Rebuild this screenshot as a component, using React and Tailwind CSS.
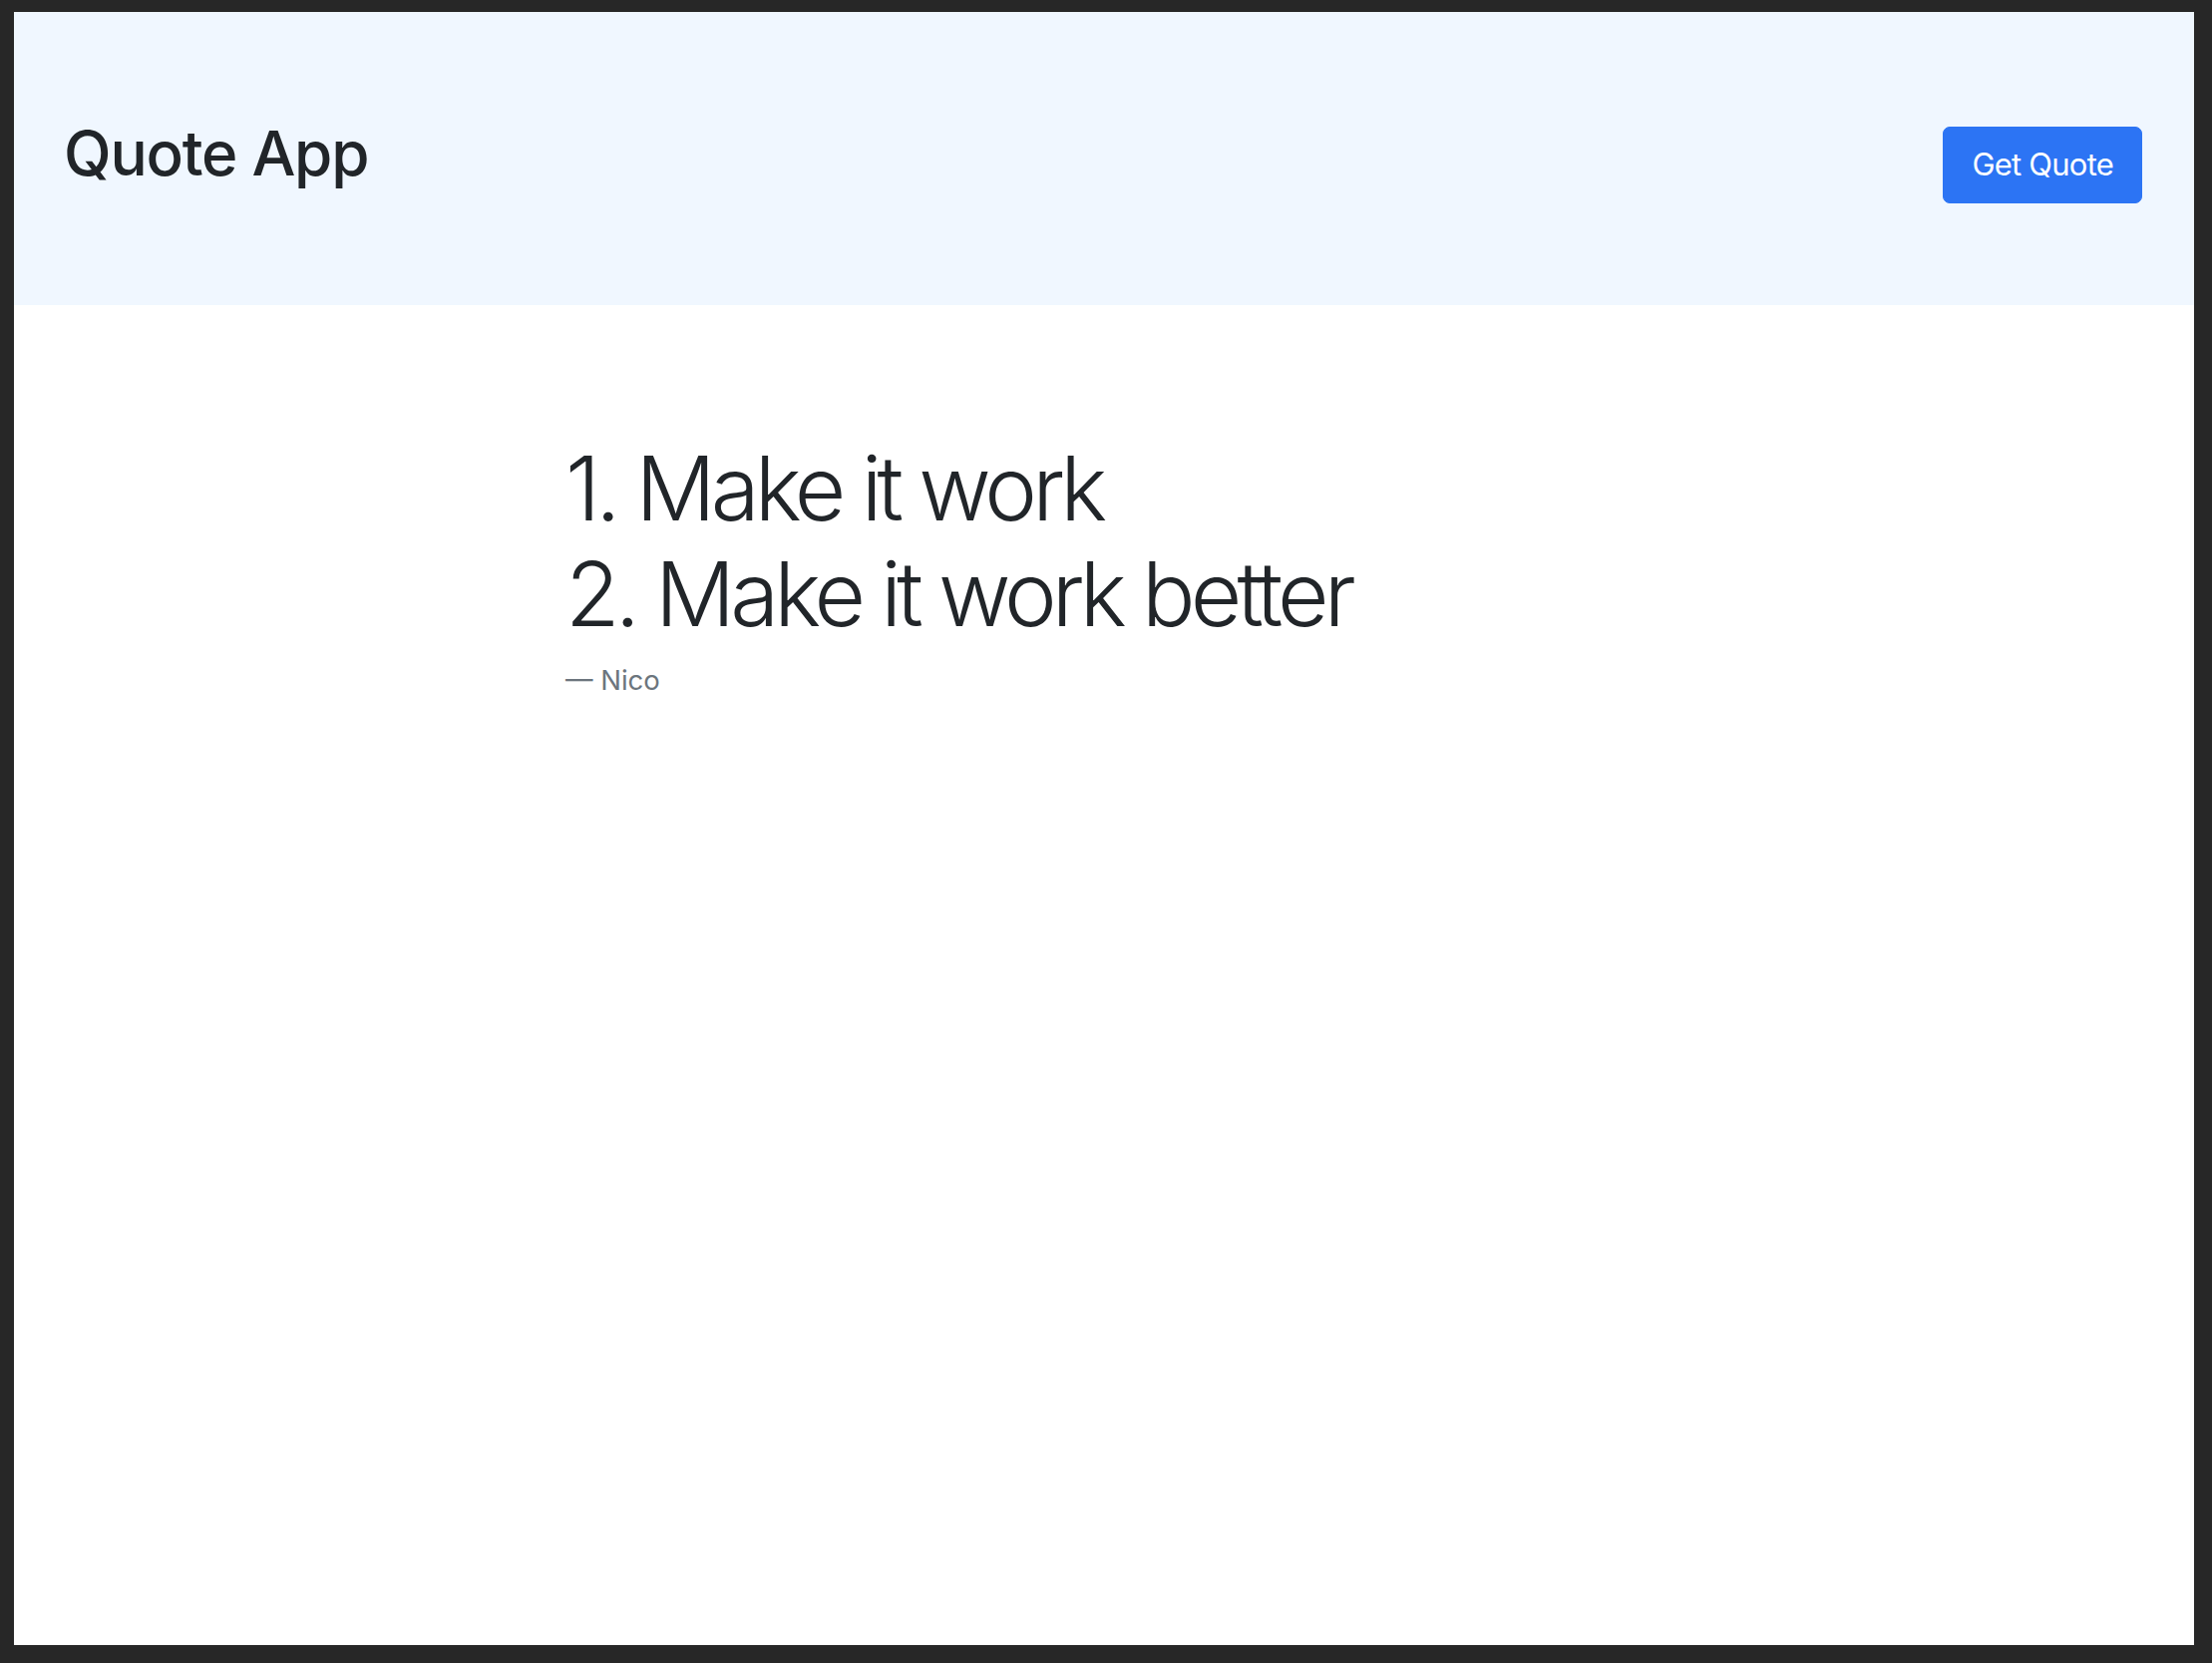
export default function App() {
  return (
    <div className="h-[1668px] w-[2218px] bg-[#272727] pt-[12px] pl-[14px] pr-[18px] pb-[18px]">
      <div className="flex h-full w-full flex-col bg-white font-['Inter',sans-serif] text-[#212529]">
        <header className="flex h-[294px] items-baseline justify-between bg-[#f0f7ff] pl-[50px] pr-[52px] pt-[105px]">
          <h1 className="text-[62px] font-medium leading-[1.2] tracking-[-0.02em]">Quote App</h1>
          <button className="rounded-[7px] border border-[#2c74f4] bg-[#2c74f4] px-[28px] py-[14px] text-[31px] leading-[1.5] tracking-[-0.025em] text-white">
            Get Quote
          </button>
        </header>
        <main className="flex-1 pl-[553px] pt-[131px]">
          <blockquote>
            <p className="text-[89px] font-light leading-[106px] tracking-[-0.055em]">
              1. Make it work
              <br />
              2. Make it work better
            </p>
          </blockquote>
          <p className="mt-[13px] text-[27.5px] leading-[1.5] text-[#6c757d]">— Nico</p>
        </main>
      </div>
    </div>
  );
}
